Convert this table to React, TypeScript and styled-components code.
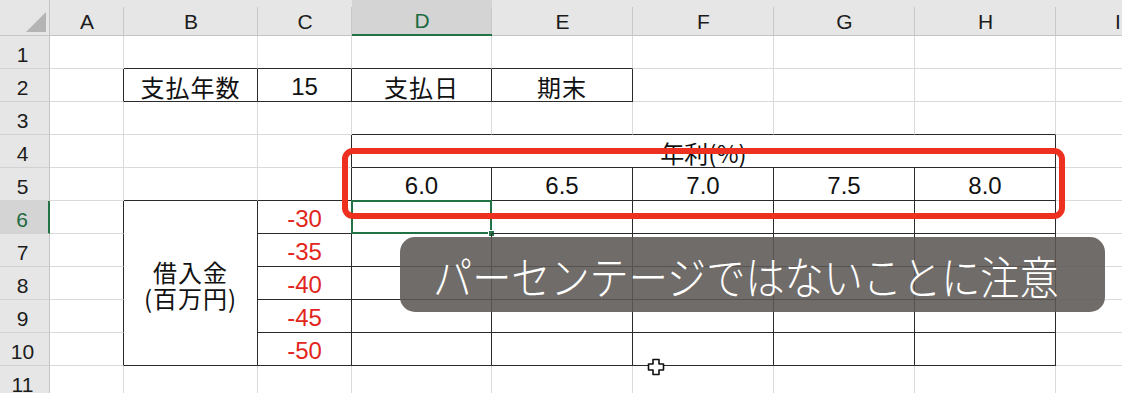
import React from 'react';
import styled, { createGlobalStyle, css } from 'styled-components';

const GlobalStyle = createGlobalStyle`
  *, *::before, *::after { box-sizing: border-box; }
  html, body { margin: 0; padding: 0; background: #fff; }
  body {
    width: 1122px;
    height: 393px;
    overflow: hidden;
    font-family: "Liberation Sans", "Noto Sans CJK JP", sans-serif;
  }
`;

const COLS = ['A', 'B', 'C', 'D', 'E', 'F', 'G', 'H', 'I'];
const ROW_COUNT = 11;
const ACTIVE_COL = 3;
const ACTIVE_ROW = 6;

const GRID_LINE = '#dadada';
const DARK_LINE = '#2a2a2a';
const GREEN = '#217346';

const Sheet = styled.div`
  position: relative;
  width: 1122px;
  height: 393px;
  overflow: hidden;
  background: #fff;
`;

const Grid = styled.div`
  display: grid;
  grid-template-columns: 50px 74px 134px 94px 140px 141px 141px 141px 141px 124px;
  grid-template-rows: 36px repeat(11, 33px);
`;

const Corner = styled.div`
  grid-column: 1;
  grid-row: 1;
  position: relative;
  background: #e6e6e6;
  border-right: 1px solid #c4c4c4;
  border-bottom: 1px solid #c4c4c4;
  &::after {
    content: '';
    position: absolute;
    right: 3px;
    bottom: 3px;
    width: 20px;
    height: 20px;
    background: #b4b4b4;
    clip-path: polygon(100% 0, 100% 100%, 0 100%);
  }
`;

const ColHeader = styled.div<{ $active: boolean }>`
  position: relative;
  grid-row: 1;
  display: flex;
  align-items: center;
  justify-content: center;
  padding-top: 8px;
  background: ${p => (p.$active ? '#d4d4d4' : '#e6e6e6')};
  color: ${p => (p.$active ? '#1e6b41' : '#1c1c1c')};
  font-family: "Liberation Sans", Arial, sans-serif;
  font-size: 21px;
  border-bottom: ${p => (p.$active ? `2px solid ${GREEN}` : '1px solid #c4c4c4')};
  &::after {
    content: '';
    position: absolute;
    right: 0;
    top: 7px;
    bottom: 0;
    width: 1px;
    background: #c9c9c9;
  }
`;

const RowHeader = styled.div<{ $active: boolean }>`
  grid-column: 1;
  display: flex;
  align-items: center;
  justify-content: center;
  padding: 6px 4px 0 0;
  background: ${p => (p.$active ? '#d4d4d4' : '#e6e6e6')};
  color: ${p => (p.$active ? '#1e6b41' : '#1c1c1c')};
  font-family: "Liberation Sans", Arial, sans-serif;
  font-size: 21px;
  border-bottom: 1px solid #d2d2d2;
  border-right: ${p => (p.$active ? `2px solid ${GREEN}` : '1px solid #c4c4c4')};
`;

type CellProps = {
  $r: number;
  $c: number;
  $rs: number;
  $cs: number;
  $dr: boolean;
  $db: boolean;
  $red: boolean;
  $selected: boolean;
  $stack: boolean;
};

const Cell = styled.div<CellProps>`
  position: relative;
  grid-row: ${p => p.$r + 1} / span ${p => p.$rs};
  grid-column: ${p => p.$c + 2} / span ${p => p.$cs};
  display: flex;
  flex-direction: ${p => (p.$stack ? 'column' : 'row')};
  align-items: center;
  justify-content: center;
  padding-top: 4px;
  border-right: 1px solid ${p => (p.$dr ? DARK_LINE : GRID_LINE)};
  border-bottom: 1px solid ${p => (p.$db ? DARK_LINE : GRID_LINE)};
  font-family: "Liberation Sans", Arial, "Noto Sans CJK JP", sans-serif;
  font-size: 24px;
  line-height: 26px;
  color: ${p => (p.$red ? '#e2261c' : '#111')};
  white-space: nowrap;
  ${p =>
    p.$selected &&
    css`
      &::before {
        content: '';
        position: absolute;
        left: -1px;
        top: -1px;
        right: -1px;
        bottom: -1px;
        border: 2px solid ${GREEN};
      }
      &::after {
        content: '';
        position: absolute;
        right: -4px;
        bottom: -4px;
        width: 7px;
        height: 7px;
        background: ${GREEN};
        border: 1px solid #fff;
      }
    `}
`;

const Jp = styled.span<{ $spaced?: boolean }>`
  font-family: "Noto Sans CJK JP", sans-serif;
  font-size: 24px;
  letter-spacing: ${p => (p.$spaced ? '1px' : '0')};
`;

const Highlight = styled.div`
  position: absolute;
  left: 342px;
  top: 148px;
  width: 723px;
  height: 71px;
  border: 6px solid #ee3020;
  border-radius: 11px;
  pointer-events: none;
`;

const Caption = styled.div`
  position: absolute;
  left: 400px;
  top: 237px;
  width: 705px;
  height: 75px;
  border-radius: 15px;
  background: rgba(92, 88, 84, 0.88);
  display: flex;
  align-items: center;
  padding-left: 33px;
  overflow: hidden;
`;

const CaptionText = styled.span`
  display: inline-block;
  font-family: "Noto Sans CJK JP", sans-serif;
  font-weight: 300;
  font-size: 45px;
  line-height: 1;
  color: #fff;
  white-space: nowrap;
  transform: scaleX(0.87);
  transform-origin: left center;
  margin-top: 2px;
`;

const Cursor = styled.svg`
  position: absolute;
  left: 647px;
  top: 358px;
  width: 18px;
  height: 18px;
`;

type Content = { text: React.ReactNode; red?: boolean; stack?: boolean };

const inRange = (v: number, a: number, b: number) => v >= a && v <= b;

const bordered = (r: number, c: number) =>
  (r === 2 && inRange(c, 1, 4)) ||
  ((r === 4 || r === 5) && inRange(c, 3, 7)) ||
  (inRange(r, 6, 10) && inRange(c, 1, 7));

const groupId = (r: number, c: number) => {
  if (r === 4 && inRange(c, 3, 7)) return 'M1';
  if (c === 1 && inRange(r, 6, 10)) return 'M2';
  return `${r},${c}`;
};

const darkRight = (r: number, c: number) =>
  (bordered(r, c) || bordered(r, c + 1)) && groupId(r, c) !== groupId(r, c + 1);
const darkBottom = (r: number, c: number) =>
  (bordered(r, c) || bordered(r + 1, c)) && groupId(r, c) !== groupId(r + 1, c);

const merges: Record<string, { rs: number; cs: number }> = {
  '4,3': { rs: 1, cs: 5 },
  '6,1': { rs: 5, cs: 1 },
};

const contents: Record<string, Content> = {
  '2,1': { text: <Jp $spaced>支払年数</Jp> },
  '2,2': { text: '15' },
  '2,3': { text: <Jp $spaced>支払日</Jp> },
  '2,4': { text: <Jp $spaced>期末</Jp> },
  '4,3': { text: <Jp>年利(%)</Jp> },
  '5,3': { text: '6.0' },
  '5,4': { text: '6.5' },
  '5,5': { text: '7.0' },
  '5,6': { text: '7.5' },
  '5,7': { text: '8.0' },
  '6,2': { text: '-30', red: true },
  '7,2': { text: '-35', red: true },
  '8,2': { text: '-40', red: true },
  '9,2': { text: '-45', red: true },
  '10,2': { text: '-50', red: true },
  '6,1': {
    text: (
      <>
        <Jp $spaced>借入金</Jp>
        <Jp $spaced>(百万円)</Jp>
      </>
    ),
    stack: true,
  },
};

const covered = (r: number, c: number) =>
  (r === 4 && inRange(c, 4, 7)) || (c === 1 && inRange(r, 7, 10));

export default function App() {
  const cells: React.ReactNode[] = [];
  for (let r = 1; r <= ROW_COUNT; r++) {
    cells.push(
      <RowHeader key={`rh${r}`} $active={r === ACTIVE_ROW} style={{ gridRow: r + 1 }}>
        {r}
      </RowHeader>
    );
    for (let c = 0; c < COLS.length; c++) {
      if (covered(r, c)) continue;
      const key = `${r},${c}`;
      const m = merges[key] ?? { rs: 1, cs: 1 };
      const lastR = r + m.rs - 1;
      const lastC = c + m.cs - 1;
      const content = contents[key];
      cells.push(
        <Cell
          key={key}
          $r={r}
          $c={c}
          $rs={m.rs}
          $cs={m.cs}
          $dr={darkRight(r, lastC)}
          $db={darkBottom(lastR, c)}
          $red={!!content?.red}
          $stack={!!content?.stack}
          $selected={r === ACTIVE_ROW && c === ACTIVE_COL}
        >
          {content?.text}
        </Cell>
      );
    }
  }

  return (
    <>
      <GlobalStyle />
      <Sheet>
        <Grid>
          <Corner />
          {COLS.map((name, i) => (
            <ColHeader key={name} $active={i === ACTIVE_COL} style={{ gridColumn: i + 2 }}>
              {name}
            </ColHeader>
          ))}
          {cells}
        </Grid>
        <Highlight />
        <Caption>
          <CaptionText>パーセンテージではないことに注意</CaptionText>
        </Caption>
        <Cursor viewBox="0 0 18 18">
          <path
            d="M6 1.5h6v4.5h4.5v6H12v4.5H6V12H1.5V6H6z"
            fill="#fff"
            stroke="#111"
            strokeWidth="1.6"
            strokeLinejoin="round"
          />
        </Cursor>
      </Sheet>
    </>
  );
}
